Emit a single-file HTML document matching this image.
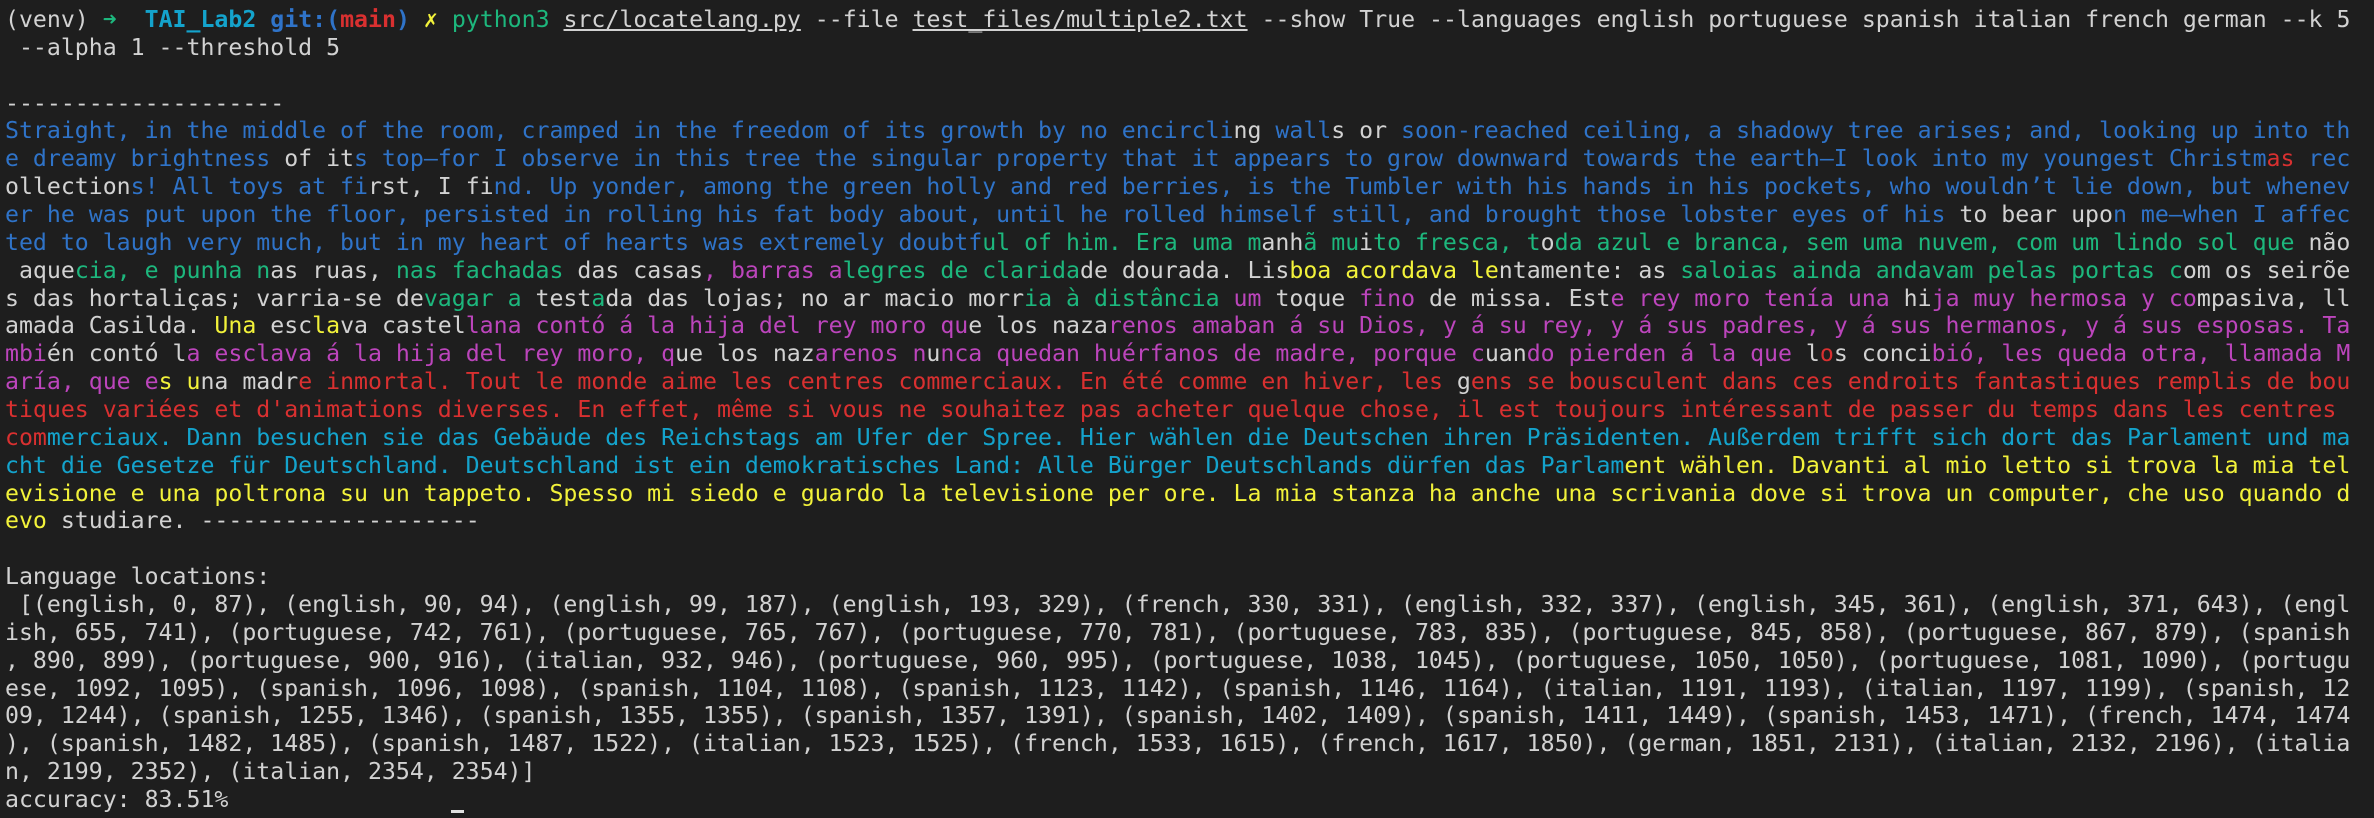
<!DOCTYPE html>
<html><head><meta charset="utf-8">
<style>
html,body{margin:0;padding:0;background:#1e1e1e;}
body{width:2374px;height:818px;overflow:hidden;position:relative;}
pre{margin:0;position:absolute;left:5px;top:6px;font-family:"DejaVu Sans Mono","Liberation Mono",monospace;font-size:23.2px;line-height:27.86px;color:#d2d2d2;white-space:pre;}
.b{color:#2f73c8}.g{color:#1db77d}.m{color:#bc45bc}.y{color:#f2f23a}.r{color:#d93030}.c{color:#14a3cc}.w{color:#d2d2d2}
.bd{font-weight:bold}.u{text-decoration:underline}
.cur{position:absolute;left:451px;top:810px;width:13px;height:3px;background:#e0e0e0;}
</style></head><body>
<pre>(venv) <span class="g bd">➜</span>  <span class="c bd">TAI_Lab2</span> <span class="b bd">git:(</span><span class="r bd">main</span><span class="b bd">)</span> <span class="y">✗</span> <span class="g">python3</span> <span class="u">src/locatelang.py</span> --file <span class="u">test_files/multiple2.txt</span> --show True --languages english portuguese spanish italian french german --k 5
 --alpha 1 --threshold 5

--------------------
<span class="b">Straight, in the middle of the room, cramped in the freedom of its growth by no encircli</span>ng<span class="b"> wall</span>s or <span class="b">soon-reached ceiling, a shadowy tree arises; and, looking up into th</span>
<span class="b">e dreamy brightness </span>of it<span class="b">s top—for I observe in this tree the singular property that it appears to grow downward towards the earth—I look into my youngest Christm</span><span class="r">as</span><span class="b"> rec</span>
ollection<span class="b">s! All toys at fi</span>rst, I fi<span class="b">nd. Up yonder, among the green holly and red berries, is the Tumbler with his hands in his pockets, who wouldn’t lie down, but whenev</span>
<span class="b">er he was put upon the floor, persisted in rolling his fat body about, until he rolled himself still, and brought those lobster eyes of his</span> to bear upo<span class="b">n me—when I affec</span>
<span class="b">ted to laugh very much, but in my heart of hearts was extremely doubtf</span><span class="g">ul of him. Era uma m</span>anh<span class="g">ã mu</span>i<span class="g">to fresca, t</span>o<span class="g">da azul e branca, sem uma nuvem, com um lindo sol que</span> não
 aque<span class="g">cia, e punha n</span>as ruas, <span class="g">nas fachadas</span> das casas<span class="m">, barras a</span><span class="g">legres de clarida</span>de dourada. Lis<span class="y">boa acordava le</span>ntamente: as <span class="g">saloias ainda andavam pelas portas c</span>om os seirõe
s das hortaliças; varria-se de<span class="g">vagar a</span> test<span class="g">a</span>da das lojas; no ar macio morr<span class="g">ia à distância</span><span class="m"> um</span> toque <span class="m">fino</span> de missa. Est<span class="m">e rey moro tenía una</span> hi<span class="m">ja muy hermosa y co</span>mpasiva, ll
amada Casilda. <span class="y">Una</span> esc<span class="y">la</span>va castel<span class="m">lana contó á la hija del rey moro qu</span>e los naza<span class="m">renos amaban á su Dios, y á su rey, y á sus padres, y á sus hermanos, y á sus esposas. Ta</span>
<span class="m">mbi</span>én contó l<span class="m">a esclava á la hija del rey moro, q</span>ue los naz<span class="m">arenos n</span>u<span class="m">nca quedan huérfanos de madre, porque c</span>uan<span class="m">do pierden á la que </span>l<span class="r">o</span>s conci<span class="m">bió, les queda otra, llamada M</span>
<span class="m">aría, que e</span><span class="y">s u</span>na madr<span class="r">e inmortal. Tout le monde aime les centres commerciaux. En été comme en hiver, les </span>g<span class="r">ens se bousculent dans ces endroits fantastiques remplis de bou</span>
<span class="r">tiques variées et d'animations diverses. En effet, même si vous ne souhaitez pas acheter quelque chose, il est toujours intéressant de passer du temps dans les centres </span>
<span class="r">com</span><span class="c">merciaux. Dann besuchen sie das Gebäude des Reichstags am Ufer der Spree. Hier wählen die Deutschen ihren Präsidenten. Außerdem trifft sich dort das Parlament und ma</span>
<span class="c">cht die Gesetze für Deutschland. Deutschland ist ein demokratisches Land: Alle Bürger Deutschlands dürfen das Parlam</span><span class="y">ent wählen. Davanti al mio letto si trova la mia tel</span>
<span class="y">evisione e una poltrona su un tappeto. Spesso mi siedo e guardo la televisione per ore. La mia stanza ha anche una scrivania dove si trova un computer, che uso quando d</span>
<span class="y">evo</span> studiare. --------------------

Language locations:
 [(english, 0, 87), (english, 90, 94), (english, 99, 187), (english, 193, 329), (french, 330, 331), (english, 332, 337), (english, 345, 361), (english, 371, 643), (engl
ish, 655, 741), (portuguese, 742, 761), (portuguese, 765, 767), (portuguese, 770, 781), (portuguese, 783, 835), (portuguese, 845, 858), (portuguese, 867, 879), (spanish
, 890, 899), (portuguese, 900, 916), (italian, 932, 946), (portuguese, 960, 995), (portuguese, 1038, 1045), (portuguese, 1050, 1050), (portuguese, 1081, 1090), (portugu
ese, 1092, 1095), (spanish, 1096, 1098), (spanish, 1104, 1108), (spanish, 1123, 1142), (spanish, 1146, 1164), (italian, 1191, 1193), (italian, 1197, 1199), (spanish, 12
09, 1244), (spanish, 1255, 1346), (spanish, 1355, 1355), (spanish, 1357, 1391), (spanish, 1402, 1409), (spanish, 1411, 1449), (spanish, 1453, 1471), (french, 1474, 1474
), (spanish, 1482, 1485), (spanish, 1487, 1522), (italian, 1523, 1525), (french, 1533, 1615), (french, 1617, 1850), (german, 1851, 2131), (italian, 2132, 2196), (italia
n, 2199, 2352), (italian, 2354, 2354)]
accuracy: 83.51%</pre>
<div class="cur"></div>
</body></html>
